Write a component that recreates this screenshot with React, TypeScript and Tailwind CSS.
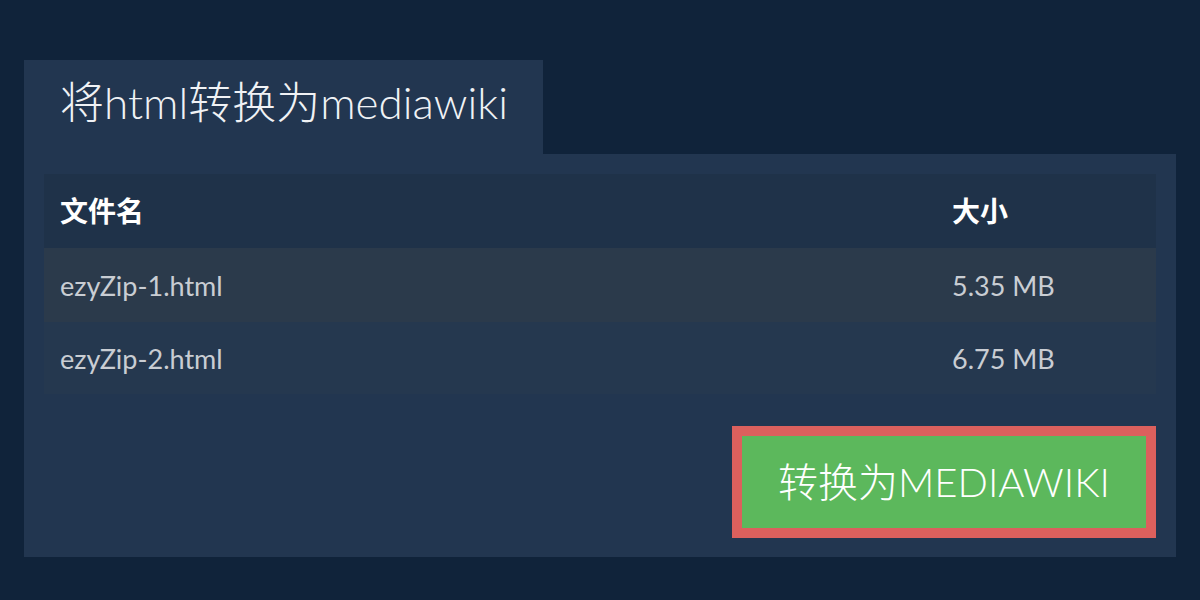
import React from "react";

const rows = [
  { name: "ezyZip-1.html", size: "5.35 MB", bg: "bg-[#2b3a4b]" },
  { name: "ezyZip-2.html", size: "6.75 MB", bg: "bg-[#25384f]" },
];

const light = { fontFamily: "'Lato Light', Lato, 'Noto Sans CJK SC Light', 'Noto Sans CJK SC', sans-serif" };

export default function App() {
  return (
    <div
      className="w-[1200px] h-[600px] bg-[#10233a] pt-[60px] px-[24px] overflow-hidden"
      style={{ fontFamily: "Lato, 'Noto Sans CJK SC', sans-serif" }}
    >
      <div className="w-[519px] h-[94px] bg-[#223650] pl-[36px] pt-[14px]">
        <span className="text-[44px] font-light text-[#f0f2f5] leading-[56px]" style={light}>
          将html转换为mediawiki
        </span>
      </div>
      <div className="h-[403px] bg-[#223650] pt-[20px] px-[20px] flex flex-col">
        <div className="flex flex-col">
          <div className="h-[74px] bg-[#1f3249] flex items-center px-[16px]">
            <div className="w-[892px] text-[28px] font-bold text-white">文件名</div>
            <div className="text-[28px] font-bold text-white">大小</div>
          </div>
          {rows.map((r, i) => (
            <div
              key={r.name}
              className={`${r.bg} ${i === 0 ? "h-[74px]" : "h-[72px]"} flex items-center px-[16px] text-[27px] text-[#c9cdd3]`}
            >
              <div className="w-[892px] pt-[3px]">{r.name}</div>
              <div className="pt-[3px]">{r.size}</div>
            </div>
          ))}
        </div>
        <div className="flex justify-end mt-[32px]">
          <div className="w-[424px] h-[112px] border-[10px] border-[#dc605d] bg-[#5cb85c] flex items-center justify-center">
            <span className="text-[40px] font-light text-white" style={light}>转换为MEDIAWIKI</span>
          </div>
        </div>
      </div>
    </div>
  );
}
